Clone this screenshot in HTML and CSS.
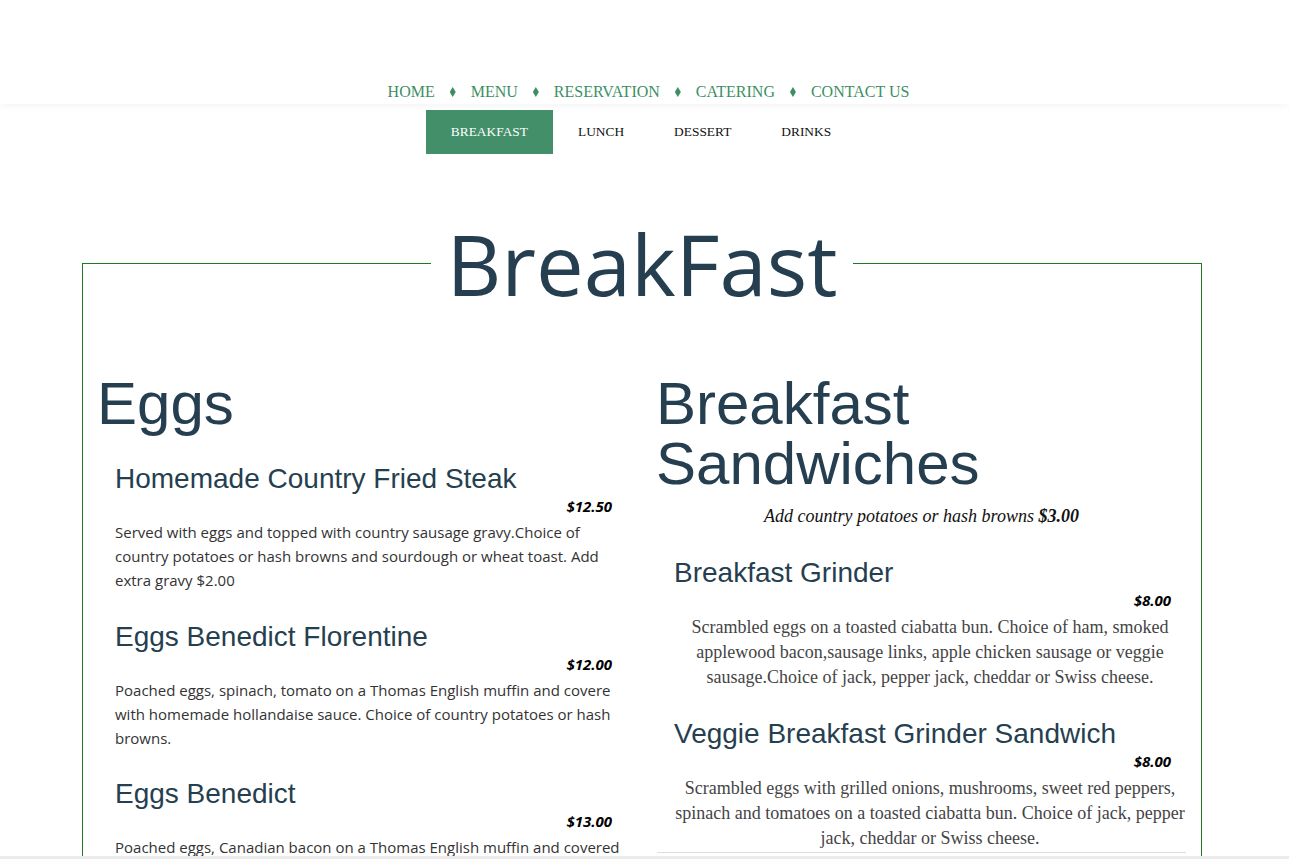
FILE: index.html
```html
<!DOCTYPE html>
<html lang="en">
<head>
<meta charset="utf-8">
<title>Menu - BreakFast</title>
<link rel="stylesheet" href="styles.css">
</head>
<body>
<header class="site-header">
  <nav class="main-nav">
    <a href="#" class="nav-link">HOME</a><span class="sep"></span>
    <a href="#" class="nav-link">MENU</a><span class="sep"></span>
    <a href="#" class="nav-link">RESERVATION</a><span class="sep"></span>
    <a href="#" class="nav-link">CATERING</a><span class="sep"></span>
    <a href="#" class="nav-link">CONTACT US</a>
  </nav>
</header>

<div class="tabs-wrap">
  <ul class="tabs">
    <li class="tab active">BREAKFAST</li>
    <li class="tab">LUNCH</li>
    <li class="tab">DESSERT</li>
    <li class="tab">DRINKS</li>
  </ul>
</div>

<fieldset class="menu-box">
  <legend class="menu-title">BreakFast</legend>
  <div class="columns">
    <section class="col">
      <h2 class="section-title">Eggs</h2>
      <article class="item">
        <h3 class="item-name">Homemade Country Fried Steak</h3>
        <div class="price">$12.50</div>
        <p class="desc">Served with eggs and topped with country sausage gravy.Choice of country potatoes or hash browns and sourdough or wheat toast. Add extra gravy $2.00</p>
      </article>
      <article class="item">
        <h3 class="item-name">Eggs Benedict Florentine</h3>
        <div class="price">$12.00</div>
        <p class="desc">Poached eggs, spinach, tomato on a Thomas English muffin and covere with homemade hollandaise sauce. Choice of country potatoes or hash browns.</p>
      </article>
      <article class="item">
        <h3 class="item-name">Eggs Benedict</h3>
        <div class="price">$13.00</div>
        <p class="desc">Poached eggs, Canadian bacon on a Thomas English muffin and covered with homemade hollandaise sauce. Choice of country potatoes or hash browns.</p>
      </article>
    </section>
    <section class="col col-right">
      <h2 class="section-title">Breakfast Sandwiches</h2>
      <p class="note">Add country potatoes or hash browns <b>$3.00</b></p>
      <article class="item">
        <h3 class="item-name">Breakfast Grinder</h3>
        <div class="price">$8.00</div>
        <p class="desc serif">Scrambled eggs on a toasted ciabatta bun. Choice of ham, smoked applewood bacon,sausage links, apple chicken sausage or veggie sausage.Choice of jack, pepper jack, cheddar or Swiss cheese.</p>
      </article>
      <article class="item last">
        <h3 class="item-name">Veggie Breakfast Grinder Sandwich</h3>
        <div class="price">$8.00</div>
        <p class="desc serif">Scrambled eggs with grilled onions, mushrooms, sweet red peppers, spinach and tomatoes on a toasted ciabatta bun. Choice of jack, pepper jack, cheddar or Swiss cheese.</p>
      </article>
    </section>
  </div>
</fieldset>

<div class="bottom-bar"></div>
</body>
</html>
```

FILE: styles.css
```css
html, body {
  margin: 0;
  padding: 0;
  background: #ffffff;
}

body {
  font-family: "Liberation Serif", "Times New Roman", serif;
  color: #222;
}

.site-header {
  height: 104px;
  box-sizing: border-box;
  display: flex;
  align-items: flex-end;
  justify-content: center;
  padding-bottom: 2px;
  background: #fff;
  box-shadow: 0 3px 6px rgba(0, 0, 0, 0.035);
  position: relative;
  z-index: 1;
}

.main-nav {
  display: flex;
  align-items: center;
  padding-left: 8px;
}

.nav-link {
  font-family: "Liberation Serif", "Times New Roman", serif;
  font-size: 16px;
  line-height: 20px;
  color: #3d8f63;
  text-decoration: none;
}

.sep {
  display: inline-block;
  width: 6px;
  height: 10px;
  margin: 0 15px;
  background: #3d8f63;
  clip-path: polygon(50% 0, 100% 50%, 50% 100%, 0 50%);
}

.tabs-wrap {
  display: flex;
  justify-content: center;
  padding-right: 7px;
  margin-top: 6px;
}

.tabs {
  display: flex;
  list-style: none;
  margin: 0;
  padding: 0;
}

.tab {
  font-family: "Liberation Serif", "Times New Roman", serif;
  font-size: 13.4px;
  line-height: 44px;
  height: 44px;
  padding: 0 25px;
  color: #111;
}

.tab.active {
  background: #428f69;
  color: #fff;
}

.menu-box {
  margin: 51px 87px 0 82px;
  padding: 0;
  border: 1px solid #1f7a1f;
  border-bottom: none;
  min-width: 0;
}

.menu-title {
  margin: 0 auto;
  padding: 0 15px;
  font-family: "Open Sans", sans-serif;
  font-weight: 400;
  font-size: 85px;
  line-height: normal;
  color: #263f50;
}

.columns {
  display: grid;
  grid-template-columns: 1fr 1fr;
}

.col {
  padding: 0 15px;
  min-width: 0;
}

.section-title {
  font-family: "Liberation Sans", Arial, sans-serif;
  font-weight: 400;
  font-size: 60px;
  line-height: 60px;
  color: #263f50;
  margin: 53px 0 29px -1px;
}

.note {
  font-family: "Liberation Serif", "Times New Roman", serif;
  font-style: italic;
  font-size: 18px;
  line-height: 25px;
  text-align: center;
  color: #111;
  margin: -19px 0 28px;
}

.note b {
  font-weight: 700;
}

.item {
  padding-left: 17px;
  margin-bottom: 28.5px;
}

.col-right .item {
  margin-bottom: 28px;
}

.col-right .item.last {
  border-bottom: 1px solid #dddddd;
  padding-bottom: 1px;
}

.item-name {
  font-family: "Liberation Sans", Arial, sans-serif;
  font-weight: 400;
  font-size: 28px;
  line-height: 31px;
  color: #263f50;
  margin: 0;
}

.price {
  font-family: "Open Sans", sans-serif;
  font-style: italic;
  font-weight: 700;
  font-size: 15px;
  line-height: 20px;
  text-align: right;
  padding-right: 15px;
  margin-top: 2px;
  color: #000;
}

.desc {
  font-family: "Open Sans", sans-serif;
  font-size: 15px;
  line-height: 24px;
  color: #333;
  margin: 4px 0 0;
}

.desc.serif {
  font-family: "Liberation Serif", "Times New Roman", serif;
  font-size: 18px;
  line-height: 25px;
  color: #444;
  text-align: center;
  margin-top: 5px;
}

.bottom-bar {
  position: fixed;
  left: 0;
  right: 0;
  bottom: 0;
  height: 3px;
  background: #ebebeb;
  z-index: 5;
}
```
